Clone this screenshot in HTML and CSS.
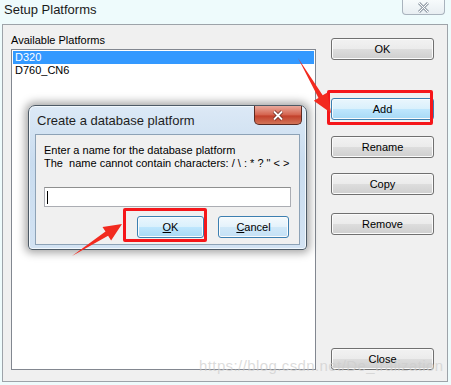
FILE: index.html
```html
<!DOCTYPE html>
<html lang="en">

<head>
    <meta name="viewport" content="width=device-width, initial-scale=1.0" />
    <title>Setup Platforms</title>
    <link rel="stylesheet" href="styles.css">
</head>

<body>
    <div class="window">
        <div class="titlebar">
            <span class="title">Setup Platforms</span>
            <div class="win-close">
                <svg width="13" height="11" viewBox="0 0 13 11">
                    <path d="M2 1 L11 10 M11 1 L2 10" stroke="#9aa4ae" stroke-width="3" fill="none" />
                    <path d="M2 1 L11 10 M11 1 L2 10" stroke="#fff" stroke-width="1" fill="none" />
                </svg>
            </div>
        </div>
        <div class="panel">
            <div class="left">
                <div class="label">Available Platforms</div>
                <div class="listbox">
                    <div class="item selected">D320</div>
                    <div class="item">D760_CN6</div>
                </div>
            </div>
            <div class="right">
                <button class="btn ok">OK</button>
                <button class="btn add focused">Add</button>
                <button class="btn rename">Rename</button>
                <button class="btn copy">Copy</button>
                <button class="btn remove">Remove</button>
                <button class="btn close">Close</button>
            </div>
        </div>
    </div>

    <div class="dialog">
        <div class="dialog-title">
            <span>Create a database platform</span>
            <div class="dialog-close">
                <svg width="14" height="11" viewBox="0 0 14 11">
                    <path d="M3 1.5 L11 9.5 M11 1.5 L3 9.5" stroke="#6a2a20" stroke-width="3.4" fill="none" />
                    <path d="M3 1.5 L11 9.5 M11 1.5 L3 9.5" stroke="#fff" stroke-width="1.8" fill="none" />
                </svg>
            </div>
        </div>
        <div class="dialog-body">
            <p>Enter a name for the database platform</p>
            <p>The &nbsp;name cannot contain characters: / \ : * ? " &lt; &gt;</p>
            <div class="input"><span class="caret"></span></div>
            <div class="dialog-buttons">
                <button class="btn dlg-ok focused"><u>O</u>K</button>
                <button class="btn dlg-cancel soft"><u>C</u>ancel</button>
            </div>
        </div>
    </div>

    <div class="mark mark-add"></div>
    <div class="mark mark-ok"></div>

    <svg class="arrows" width="451" height="385" viewBox="0 0 451 385">
        <polygon points="298,58 318.5,97.9 313.8,100.8 331,113 327.4,92.4 322.7,95.3" fill="#f22a1f" />
        <polygon points="72,256 108.1,235.8 111.1,240.4 122,224 102.5,227 105.5,231.6" fill="#f22a1f" />
    </svg>

    <div class="watermark">https://blog.csdn.net/De_tralization</div>
</body>

</html>
```

FILE: styles.css
```css
* {
    padding: 0;
    margin: 0;
    box-sizing: border-box;
    font-family: "Liberation Sans", Arial, sans-serif;
}

body {
    width: 451px;
    height: 385px;
    background-color: #eefbfc;
    position: relative;
    overflow: hidden;
    color: #000;
}

.titlebar {
    height: 24px;
    display: flex;
    justify-content: space-between;
    align-items: flex-start;
    padding-left: 4px;
    padding-right: 6px;
}

.title {
    font-size: 13px;
    line-height: 20px;
    color: #1a1a1a;
}

.win-close {
    width: 43px;
    height: 15px;
    border: 1px solid #a9b3bd;
    border-top: none;
    border-radius: 0 0 4px 4px;
    background: linear-gradient(#f7fbfc, #e8eef2);
    display: flex;
    justify-content: center;
    align-items: center;
}

.panel {
    margin-left: 2px;
    width: 446px;
    height: 358px;
    border: 1px solid #9da3a9;
    background-color: #f0f0f0;
    padding: 8px 13px 11px 8px;
    display: grid;
    grid-template-columns: 305px 103px;
    column-gap: 15px;
}

.left {
    display: flex;
    flex-direction: column;
}

.label {
    font-size: 11px;
    line-height: 14px;
    margin-bottom: 2px;
}

.listbox {
    flex: 1;
    background-color: #fff;
    border: 1px solid #828790;
    padding: 1px;
}

.item {
    font-size: 11px;
    line-height: 13px;
    height: 13px;
    padding-left: 2px;
}

.item.selected {
    background-color: #3399ff;
    color: #fff;
}

.right {
    display: flex;
    flex-direction: column;
}

.btn {
    height: 22px;
    width: 103px;
    font-size: 11px;
    color: #000;
    border: 1px solid #707070;
    border-radius: 3px;
    background: linear-gradient(#f2f2f2 0%, #ebebeb 50%, #dddddd 51%, #cfcfcf 100%);
    box-shadow: inset 0 0 0 1px #fbfbfb;
}

.btn.focused {
    border-color: #3c7fb1;
    background: linear-gradient(#eaf6fd 0%, #d9f0fc 50%, #bee6fd 51%, #a7d9f5 100%);
}

.btn.soft {
    border-color: #3c7fb1;
    background: linear-gradient(#f4fafd 0%, #e4f2fb 50%, #d0e8f8 51%, #c4e1f6 100%);
}

.ok {
    margin-top: 5px;
}

.add {
    margin-top: 38px;
}

.rename {
    margin-top: 16px;
}

.copy {
    margin-top: 15px;
}

.remove {
    margin-top: 18px;
}

.close {
    margin-top: auto;
}

/* modal dialog on top of the window */
.dialog {
    position: absolute;
    left: 28px;
    top: 105px;
    width: 279px;
    height: 145px;
    border: 1px solid #4d5a66;
    border-radius: 7px 7px 4px 4px;
    background: linear-gradient(#dce9f6, #c9dcef 40%, #d3e3f3);
    box-shadow: 0 0 8px 3px rgba(0, 0, 0, 0.35), inset 0 0 0 1px #f2f8fd;
    padding: 0 6px 4px 6px;
    display: flex;
    flex-direction: column;
}

.dialog-title {
    height: 28px;
    display: flex;
    justify-content: space-between;
    align-items: flex-start;
    padding-left: 2px;
}

.dialog-title span {
    font-size: 13px;
    line-height: 29px;
    color: #1e1e1e;
}

.dialog-close {
    width: 48px;
    height: 19px;
    margin-right: -2px;
    border: 1px solid #5b2a22;
    border-top: none;
    border-radius: 0 0 5px 5px;
    background: linear-gradient(#e9a99c, #d4624d 50%, #c2402b 55%, #d27458);
    display: flex;
    justify-content: center;
    align-items: center;
}

.dialog-body {
    flex: 1;
    background-color: #f0f0f0;
    border: 1px solid #8da2b6;
    padding: 9px 9px 0 8px;
    display: flex;
    flex-direction: column;
}

.dialog-body p {
    font-size: 11px;
    line-height: 13px;
}

.input {
    margin-top: 17px;
    height: 20px;
    width: 247px;
    background-color: #fff;
    border: 1px solid #abadb3;
    border-top-color: #8e8f8f;
    padding: 3px 2px;
}

.caret {
    display: block;
    width: 1px;
    height: 13px;
    background-color: #000;
}

.dialog-buttons {
    margin-top: 9px;
    display: flex;
    gap: 14px;
    padding-left: 93px;
}

.dlg-ok {
    width: 67px;
    height: 22px;
}

.dlg-cancel {
    width: 71px;
    height: 22px;
}

/* annotation marks */
.mark {
    position: absolute;
    border: 3px solid #f5161a;
    border-radius: 2px;
}

.mark-add {
    left: 327px;
    top: 90px;
    width: 106px;
    height: 35px;
}

.mark-ok {
    left: 123px;
    top: 208px;
    width: 84px;
    height: 34px;
}

.arrows {
    position: absolute;
    left: 0;
    top: 0;
}

.watermark {
    position: absolute;
    left: 199px;
    top: 357px;
    font-size: 15px;
    letter-spacing: 0.4px;
    color: rgba(205, 205, 205, 0.7);
    white-space: nowrap;
}
```
